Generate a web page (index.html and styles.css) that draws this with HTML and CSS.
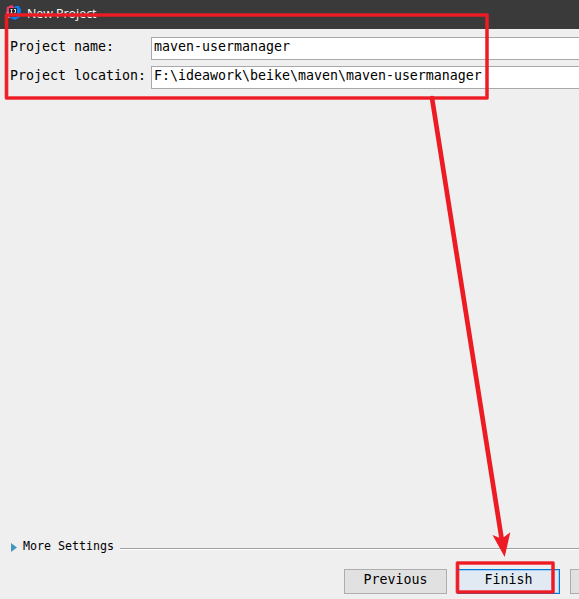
FILE: index.html
```html
<!DOCTYPE html>
<html lang="en">
<head>
<meta charset="utf-8">
<title>New Project</title>
<link rel="stylesheet" href="styles.css">
</head>
<body>
<div class="dialog">
  <header class="titlebar">
    <svg class="logo" width="16" height="16" viewBox="0 0 16 16">
      <path d="M1 2 6 0 9 3 5 9 2 13 0 9Z" fill="#e83e6b"/>
      <path d="M9 1 13 1 15 5 14 12 9 15 4 13 8 8Z" fill="#087cf2"/>
      <path d="M1 7 4 7 4 13 1 13Z" fill="#e87883"/>
      <path d="M3 3H11V12H3Z" fill="#292729"/>
      <path d="M4.5 4.5H6.5M5.5 4.5V8M4.5 8H6.5M8 4.5H10M9.5 4.5V7.5L8 8" fill="none" stroke="#ddd"/>
    </svg>
    <span class="title">New Project</span>
  </header>
  <main class="form">
    <label class="row"><span class="label">Project name:</span><span class="field">maven-usermanager</span></label>
    <label class="row"><span class="label">Project location:</span><span class="field">F:\ideawork\beike\maven\maven-usermanager</span></label>
  </main>
  <div class="more">
    <svg class="triangle" width="6" height="9" viewBox="0 0 6 9"><path d="M0 0 6 4.5 0 9Z" fill="#4596bd"/></svg>
    <span class="more-text">More Settings</span>
    <span class="rule"></span>
  </div>
  <footer class="buttons">
    <button class="button">Previous</button>
    <button class="button primary">Finish</button>
    <button class="button" aria-label="Cancel"></button>
  </footer>
  <svg class="annotations" width="579" height="599" viewBox="0 0 579 599">
    <g fill="none" stroke="#ed1c24" stroke-linejoin="round">
      <g stroke-opacity=".6" stroke-width="4">
        <rect x="6.5" y="15" width="480.5" height="83"/>
        <rect x="457.5" y="563" width="95.5" height="29"/>
      </g>
      <g stroke-width="2.7">
        <rect x="6.5" y="15" width="480.5" height="83"/>
        <rect x="457.5" y="563" width="95.5" height="29"/>
      </g>
      <path d="M432 98 501.5 538" stroke-width="4.7" stroke-linecap="round"/>
    </g>
    <path d="M492.5 535 500 538 504 537 510.3 532.3 504.7 557Z" fill="#ed1c24"/>
  </svg>
</div>
</body>
</html>
```

FILE: styles.css
```css
* { box-sizing: border-box; }
body {
  margin: 0;
  background: #efefef;
  color: #000;
  font: 13.29px/16px "DejaVu Sans Mono", monospace;
}
.dialog {
  position: relative;
  display: flex;
  flex-direction: column;
  width: 579px;
  height: 599px;
  overflow: hidden;
}
.titlebar {
  display: flex;
  align-items: flex-start;
  gap: 5px;
  height: 29px;
  padding: 5px 6px;
  background: #3a3a3a;
  color: #fff;
}
.title { font: 12.4px/18px "Open Sans", sans-serif; }
.form {
  display: flex;
  flex-direction: column;
  gap: 6px;
  padding: 8px 0 0 10px;
}
.row { display: flex; height: 23px; white-space: pre; }
.label { width: 141px; padding-top: 2px; }
.field {
  flex: 1;
  padding: 1px 2px;
  border: 1px solid #a8a8ad;
  border-right: 0;
  background: #fff;
}
.more {
  display: flex;
  align-items: center;
  height: 16px;
  margin-top: auto;
  padding-left: 11px;
  font-size: 11.63px;
  white-space: nowrap;
}
.triangle { margin: 3px 6px 0 0; }
.more-text { width: 97px; line-height: 16px; }
.rule {
  flex: 1;
  height: 2px;
  margin-top: 5px;
  border-top: 1px solid #a0a0a0;
  background: #fff;
}
.buttons {
  display: flex;
  gap: 10px;
  padding: 15px 0 5px 344px;
}
.button {
  flex: 0 0 103px;
  height: 25px;
  padding: 0 0 3px;
  border: 1px solid #adadad;
  border-radius: 0;
  background: #e1e1e1;
  color: #000;
  font: inherit;
}
.primary {
  border-color: #0078d7;
  background: #e1eaf2;
  box-shadow: inset -1px 1px #a5d0f3, inset 0 -1px #a5d0f3;
}
.annotations { position: absolute; inset: 0; pointer-events: none; }
```
